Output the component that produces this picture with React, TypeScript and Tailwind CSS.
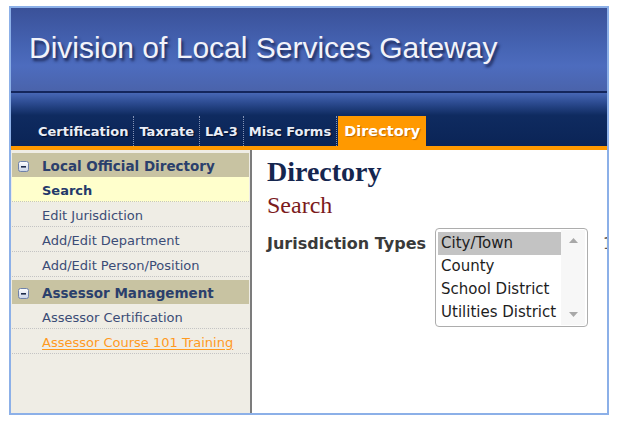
import React from 'react'

const tabs = ['Certification', 'Taxrate', 'LA-3', 'Misc Forms']

const jurisdictionTypes = ['City/Town', 'County', 'School District', 'Utilities District']

function MinusBox() {
    return (
        <svg width="11" height="11" viewBox="0 0 11 11" className="shrink-0">
            <defs>
                <linearGradient id="mb" x1="0" y1="0" x2="0" y2="1">
                    <stop offset="0" stopColor="#ffffff" />
                    <stop offset="1" stopColor="#c9d3e6" />
                </linearGradient>
            </defs>
            <rect x="0.5" y="0.5" width="10" height="10" rx="2" fill="url(#mb)" stroke="#6f82aa" />
            <rect x="3" y="5" width="5" height="1.6" fill="#1c2a4a" />
        </svg>
    )
}

function SectionHead({ title }: { title: string }) {
    return (
        <div className="h-[24px] bg-[#c8c3a2] flex items-center pl-[6px] pt-[2px] gap-[13px]">
            <MinusBox />
            <span className="text-[13.5px] font-bold text-[#2b3f6c]">{title}</span>
        </div>
    )
}

function NavItem({ label, active, link }: { label: string; active?: boolean; link?: boolean }) {
    return (
        <div
            className={`h-[25px] flex items-center pl-[30px] pt-[3px] border-b border-dotted border-[#c4c4c4] text-[13px] ${
                active ? 'bg-[#ffffcc] font-bold text-[#24396a]' : 'text-[#3b4c76]'
            }`}
        >
            <span className={link ? 'text-[#ff9a1f] underline underline-offset-2' : ''}>{label}</span>
        </div>
    )
}

export default function App() {
    return (
        <div className="w-[620px] h-[429px] bg-white pt-[6px] pl-[9px] font-['DejaVu_Sans',sans-serif]">
            <div className="w-[600px] h-[409px] border-2 border-[#8cb0e8] flex flex-col overflow-hidden">
                {/* banner */}
                <div className="h-[83px] shrink-0 bg-[linear-gradient(to_bottom,#3a5199_0%,#4563b2_45%,#4d6cbe_70%,#4a63ab_100%)] pl-[18px] pt-[22px]">
                    <h1 className="font-['Liberation_Sans',Arial,sans-serif] text-[30px] leading-[35px] text-[#f2f3fa] [text-shadow:2px_3px_3px_#1b2756]">
                        Division of Local Services Gateway
                    </h1>
                </div>
                <div className="h-[2px] shrink-0 bg-[#14265c]" />

                {/* tabs */}
                <div className="h-[53px] shrink-0 bg-[linear-gradient(to_bottom,#4767b5_0%,#2d4c92_18%,#0f2b60_42%,#0a2456_100%)] flex items-end pl-[22px]">
                    {tabs.map((t) => (
                        <div
                            key={t}
                            className="h-[30px] px-[5px] pt-[8px] leading-[16px] text-[13px] font-bold text-[#e9edf6] [text-shadow:1px_1px_1px_#000c2a] border-r border-dotted border-[#8493b5]"
                        >
                            {t}
                        </div>
                    ))}
                    <div className="h-[30px] ml-[1px] px-[6px] pt-[7px] leading-[17px] text-[14.5px] font-bold text-white bg-[#ff9900] [text-shadow:1px_1px_1px_#c46a00]">
                        Directory
                    </div>
                </div>
                <div className="h-[4px] shrink-0 bg-[#ff9900]" />

                {/* body */}
                <div className="flex-1 flex min-h-0">
                    <div className="w-[241px] shrink-0 bg-[#efede5] border-r-2 border-[#7c7c7c] pl-[1px] pr-[1px] pt-[3px]">
                        <SectionHead title="Local Official Directory" />
                        <NavItem label="Search" active />
                        <NavItem label="Edit Jurisdiction" />
                        <NavItem label="Add/Edit Department" />
                        <NavItem label="Add/Edit Person/Position" />
                        <div className="h-[3px]" />
                        <SectionHead title="Assessor Management" />
                        <NavItem label="Assessor Certification" />
                        <NavItem label="Assessor Course 101 Training" link />
                    </div>

                    <div className="flex-1 bg-white pl-[15px] pt-[6px] overflow-hidden">
                        <h2 className="font-['Liberation_Serif',Georgia,serif] font-bold text-[28px] leading-[32px] text-[#15264f]">
                            Directory
                        </h2>
                        <div className="mt-[3px] font-['Liberation_Serif',Georgia,serif] text-[24px] leading-[28px] text-[#7b1a1c]">
                            Search
                        </div>
                        <div className="mt-[9px] flex items-start">
                            <span className="pt-[6px] text-[16px] leading-[20px] font-bold text-[#3a3a3a] whitespace-nowrap">
                                Jurisdiction Types
                            </span>
                            <div className="ml-[9px] w-[153px] h-[99px] shrink-0 border border-[#adadad] rounded-[4px] flex p-[2px] pr-0">
                                <div className="w-[123px] pt-[1px]">
                                    {jurisdictionTypes.map((j, i) => (
                                        <div
                                            key={j}
                                            className={`h-[23px] pl-[3px] leading-[23px] text-[15px] text-[#1d1d1d] whitespace-nowrap ${
                                                i === 0 ? 'bg-[#c3c3c3]' : ''
                                            }`}
                                        >
                                            {j}
                                        </div>
                                    ))}
                                </div>
                                <div className="flex-1 flex flex-col justify-between items-center py-[8px] bg-[#f7f7f7] mr-[2px] my-[-1px]">
                                    <svg width="9" height="5" viewBox="0 0 9 5">
                                        <path d="M0 5 L4.5 0 L9 5 Z" fill="#a8a8a8" />
                                    </svg>
                                    <svg width="9" height="5" viewBox="0 0 9 5">
                                        <path d="M0 0 L9 0 L4.5 5 Z" fill="#a8a8a8" />
                                    </svg>
                                </div>
                            </div>
                            <span className="ml-[15px] pt-[6px] text-[15px] leading-[20px] text-[#555]">1</span>
                        </div>
                    </div>
                </div>
            </div>
        </div>
    )
}
